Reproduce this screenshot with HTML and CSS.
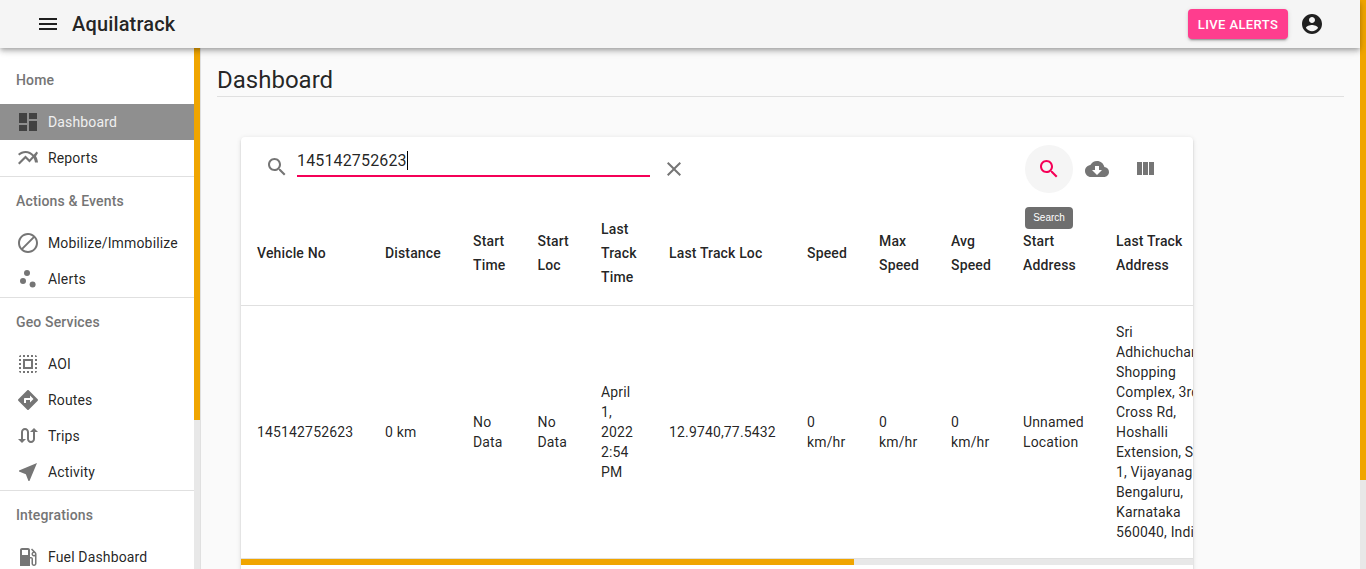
FILE: index.html
```html
<!DOCTYPE html>
<html lang="en">
<head>
  <meta charset="UTF-8" />
  <meta name="viewport" content="width=device-width, initial-scale=1.0"/>
  <title>Dashboard - Aquilatrack</title>
  <link rel="stylesheet" href="styles.css">
</head>
<body>
  <div class="app">
    <div class="page">
      <header class="topbar">
        <svg class="icon menu-icon" viewBox="0 0 24 24"><path d="M3 18h18v-2H3v2zm0-5h18v-2H3v2zm0-7v2h18V6H3z"/></svg>
        <h1 class="brand">Aquilatrack</h1>
        <button class="live-btn" type="button">Live Alerts</button>
        <svg class="icon account-icon" viewBox="0 0 24 24"><path d="M12 2C6.48 2 2 6.48 2 12s4.48 10 10 10 10-4.48 10-10S17.52 2 12 2zm0 3c1.66 0 3 1.34 3 3s-1.34 3-3 3-3-1.34-3-3 1.34-3 3-3zm0 14.2c-2.5 0-4.71-1.28-6-3.22.03-1.99 4-3.08 6-3.08 1.99 0 5.97 1.09 6 3.08-1.29 1.94-3.5 3.22-6 3.22z"/></svg>
      </header>

      <div class="layout">
        <aside class="sidebar">
          <nav class="nav">
            <section class="nav-group">
              <h3 class="nav-label">Home</h3>
              <a class="nav-item active">
                <svg class="icon" viewBox="0 0 24 24"><path d="M3 13h8V3H3v10zm0 8h8v-6H3v6zm10 0h8V11h-8v10zm0-18v6h8V3h-8z"/></svg>
                Dashboard
              </a>
              <a class="nav-item">
                <svg class="icon" viewBox="0 0 24 24"><path d="M22 6.92l-1.41-1.41-2.85 3.21C15.68 6.4 12.83 5 9.61 5 6.72 5 4.07 6.16 2 8l1.42 1.42C5.12 7.93 7.27 7 9.61 7c2.74 0 5.09 1.26 6.77 3.24l-2.88 3.24-4-4L2 16.99l1.5 1.5 6-6.01 4 4 4.05-4.55c.75 1.35 1.25 2.9 1.44 4.55H22c-.22-2.3-.95-4.39-2.04-6.14L22 6.92z"/></svg>
                Reports
              </a>
            </section>
            <section class="nav-group">
              <h3 class="nav-label">Actions &amp; Events</h3>
              <a class="nav-item">
                <svg class="icon" viewBox="0 0 24 24"><path d="M12 2C6.48 2 2 6.48 2 12s4.48 10 10 10 10-4.48 10-10S17.52 2 12 2zM4 12c0-4.42 3.58-8 8-8 1.85 0 3.55.63 4.9 1.69L5.69 16.9C4.63 15.55 4 13.85 4 12zm8 8c-1.85 0-3.55-.63-4.9-1.69L18.31 7.1C19.37 8.45 20 10.15 20 12c0 4.42-3.58 8-8 8z"/></svg>
                Mobilize/Immobilize
              </a>
              <a class="nav-item">
                <svg class="icon" viewBox="0 0 24 24"><circle cx="7" cy="14" r="3"/><circle cx="11" cy="6" r="3"/><circle cx="16.6" cy="17.6" r="3"/></svg>
                Alerts
              </a>
            </section>
            <section class="nav-group">
              <h3 class="nav-label">Geo Services</h3>
              <a class="nav-item">
                <svg class="icon" viewBox="0 0 24 24"><path d="M3 5h2V3c-1.1 0-2 .9-2 2zm0 8h2v-2H3v2zm4 8h2v-2H7v2zM3 9h2V7H3v2zm10-6h-2v2h2V3zm6 0v2h2c0-1.1-.9-2-2-2zM5 21v-2H3c0 1.1.9 2 2 2zm-2-4h2v-2H3v2zM9 3H7v2h2V3zm2 18h2v-2h-2v2zm8-8h2v-2h-2v2zm0 8c1.1 0 2-.9 2-2h-2v2zm0-12h2V7h-2v2zm0 8h2v-2h-2v2zm-4 4h2v-2h-2v2zm0-16h2V3h-2v2zM7 17h10V7H7v10zm2-8h6v6H9V9z"/></svg>
                AOI
              </a>
              <a class="nav-item">
                <svg class="icon" viewBox="0 0 24 24"><path d="M21.71 11.29l-9-9c-.39-.39-1.02-.39-1.41 0l-9 9c-.39.39-.39 1.02 0 1.41l9 9c.39.39 1.02.39 1.41 0l9-9c.39-.38.39-1.01 0-1.41zM14 14.5V12h-4v3H8v-4c0-.55.45-1 1-1h5V7.5l3.5 3.5-3.5 3.5z"/></svg>
                Routes
              </a>
              <a class="nav-item">
                <svg class="icon" viewBox="0 0 24 24"><path d="M18 4l-4 4h3v7c0 1.1-.9 2-2 2s-2-.9-2-2V8c0-2.21-1.79-4-4-4S5 5.79 5 8v7H2l4 4 4-4H7V8c0-1.1.9-2 2-2s2 .9 2 2v7c0 2.21 1.79 4 4 4s4-1.79 4-4V8h3l-4-4z"/></svg>
                Trips
              </a>
              <a class="nav-item">
                <svg class="icon" viewBox="0 0 24 24"><path d="M21 3L3 10.53v.98l6.84 2.65L12.48 21h.98L21 3z"/></svg>
                Activity
              </a>
            </section>
            <section class="nav-group">
              <h3 class="nav-label">Integrations</h3>
              <a class="nav-item">
                <svg class="icon" viewBox="0 0 24 24"><path d="M19.77 7.23l.01-.01-3.72-3.72L15 4.56l2.11 2.11c-.94.36-1.61 1.26-1.61 2.33 0 1.38 1.12 2.5 2.5 2.5.36 0 .69-.08 1-.21v7.21c0 .55-.45 1-1 1s-1-.45-1-1V14c0-1.1-.9-2-2-2h-1V5c0-1.1-.9-2-2-2H6c-1.1 0-2 .9-2 2v16h10v-7.5h1.5v5c0 1.38 1.12 2.5 2.5 2.5s2.5-1.12 2.5-2.5V9c0-.69-.28-1.32-.73-1.77zM12 10H6V5h6v5zm6 0c-.55 0-1-.45-1-1s.45-1 1-1 1 .45 1 1-.45 1-1 1z"/></svg>
                Fuel Dashboard
              </a>
            </section>
          </nav>
          <div class="rail"><div class="rail-thumb side-thumb"></div></div>
        </aside>

        <main class="content">
          <h2 class="page-title">Dashboard</h2>

          <div class="card">
            <div class="toolbar">
              <svg class="icon search-icon" viewBox="0 0 24 24"><path d="M15.5 14h-.79l-.28-.27C15.41 12.59 16 11.11 16 9.5 16 5.91 13.09 3 9.5 3S3 5.91 3 9.5 5.91 16 9.5 16c1.61 0 3.09-.59 4.23-1.57l.27.28v.79l5 4.99L20.49 19l-4.99-5zm-6 0C7.01 14 5 11.99 5 9.5S7.01 5 9.5 5 14 7.01 14 9.5 11.99 14 9.5 14z"/></svg>
              <div class="search-field"><span class="search-value">145142752623</span></div>
              <svg class="icon clear-icon" viewBox="0 0 24 24"><path d="M19 6.41L17.59 5 12 10.59 6.41 5 5 6.41 10.59 12 5 17.59 6.41 19 12 13.41 17.59 19 19 17.59 13.41 12z"/></svg>
              <div class="actions">
                <button class="icon-btn selected" type="button">
                  <svg class="icon" viewBox="0 0 24 24"><path d="M15.5 14h-.79l-.28-.27C15.41 12.59 16 11.11 16 9.5 16 5.91 13.09 3 9.5 3S3 5.91 3 9.5 5.91 16 9.5 16c1.61 0 3.09-.59 4.23-1.57l.27.28v.79l5 4.99L20.49 19l-4.99-5zm-6 0C7.01 14 5 11.99 5 9.5S7.01 5 9.5 5 14 7.01 14 9.5 11.99 14 9.5 14z"/></svg>
                  <span class="tooltip">Search</span>
                </button>
                <button class="icon-btn" type="button">
                  <svg class="icon" viewBox="0 0 24 24"><path d="M19.35 10.04C18.67 6.59 15.64 4 12 4 9.11 4 6.6 5.64 5.35 8.04 2.34 8.36 0 10.91 0 14c0 3.31 2.69 6 6 6h13c2.76 0 5-2.24 5-5 0-2.64-2.05-4.78-4.65-4.96zM17 13l-5 5-5-5h3V9h4v4h3z"/></svg>
                </button>
                <button class="icon-btn" type="button">
                  <svg class="icon" viewBox="0 0 24 24"><path d="M10 18h5V5h-5v13zm-6 0h5V5H4v13zM16 5v13h5V5h-5z"/></svg>
                </button>
              </div>
            </div>

            <div class="table-wrap">
              <table class="data-table">
                <colgroup>
                  <col class="col-vehicle">
                  <col class="col-distance">
                  <col class="col-start-time">
                  <col class="col-start-loc">
                  <col class="col-last-time">
                  <col class="col-last-loc">
                  <col class="col-metric">
                  <col class="col-metric">
                  <col class="col-metric">
                  <col class="col-start-addr">
                  <col class="col-last-addr">
                  <col>
                </colgroup>
                <thead>
                  <tr>
                    <th>Vehicle No</th>
                    <th>Distance</th>
                    <th>Start Time</th>
                    <th>Start Loc</th>
                    <th>Last Track Time</th>
                    <th>Last Track Loc</th>
                    <th>Speed</th>
                    <th>Max Speed</th>
                    <th>Avg Speed</th>
                    <th>Start Address</th>
                    <th>Last Track Address</th>
                    <th></th>
                  </tr>
                </thead>
                <tbody>
                  <tr>
                    <td>145142752623</td>
                    <td>0 km</td>
                    <td>No Data</td>
                    <td>No Data</td>
                    <td>April 1, 2022 2:54 PM</td>
                    <td>12.9740,77.5432</td>
                    <td>0 km/hr</td>
                    <td>0 km/hr</td>
                    <td>0 km/hr</td>
                    <td>Unnamed Location</td>
                    <td>Sri Adhichuchanagiri Shopping Complex, 3rd Cross Rd, Hoshalli Extension, Stage 1, Vijayanagar, Bengaluru, Karnataka 560040, India</td>
                    <td></td>
                  </tr>
                </tbody>
              </table>
            </div>
            <div class="hbar"><div class="hbar-thumb"></div></div>
          </div>
        </main>
      </div>
    </div>
    <div class="rail"><div class="rail-thumb page-thumb"></div></div>
  </div>
</body>
</html>
```

FILE: styles.css
```css
* {
  box-sizing: border-box;
}
html, body {
  height: 100%;
  margin: 0;
  overflow: hidden;
}
body {
  font-family: Roboto, "Liberation Sans", sans-serif;
  font-size: 14px;
  letter-spacing: 0.15px;
  color: rgba(0,0,0,0.87);
  background: #fafafa;
}
.icon {
  width: 24px;
  height: 24px;
  fill: #757575;
  flex-shrink: 0;
  display: block;
}
.app {
  height: 100vh;
  display: flex;
}
.page {
  flex: 1;
  min-width: 0;
  display: flex;
  flex-direction: column;
}

.rail {
  width: 6px;
  flex-shrink: 0;
  background: #e8e8e8;
}
.rail-thumb {
  background: #f0a500;
}
.page-thumb { height: 480px; }
.side-thumb { height: 372px; }
.hbar {
  height: 6px;
  background: #e8e8e8;
}
.hbar-thumb {
  width: 613px;
  height: 6px;
  background: #f0a500;
}

/* top bar */
.topbar {
  position: relative;
  z-index: 10;
  height: 48px;
  flex-shrink: 0;
  display: flex;
  align-items: center;
  padding: 0 36px;
  background: #f5f5f5;
  box-shadow: 0 2px 4px -1px rgba(0,0,0,0.2), 0 4px 5px 0 rgba(0,0,0,0.14), 0 1px 10px 0 rgba(0,0,0,0.12);
}
.menu-icon, .account-icon {
  fill: rgba(0,0,0,0.87);
}
.brand {
  margin: 0 auto 0 12px;
  font-size: 20px;
  font-weight: 500;
  line-height: 32px;
}
.live-btn {
  height: 30px;
  width: 100px;
  margin-right: 12px;
  padding: 0;
  border: none;
  border-radius: 4px;
  background: #ff3d8e;
  color: white;
  font-family: inherit;
  font-size: 13px;
  font-weight: 500;
  letter-spacing: 0.4px;
  text-transform: uppercase;
  box-shadow: 0 3px 1px -2px rgba(0,0,0,0.2), 0 2px 2px 0 rgba(0,0,0,0.14), 0 1px 5px 0 rgba(0,0,0,0.12);
}

/* sidebar */
.layout {
  flex: 1;
  min-height: 0;
  display: flex;
}
.sidebar {
  width: 201px;
  flex-shrink: 0;
  display: flex;
  overflow: hidden;
  background: white;
  border-right: 1px solid #e0e0e0;
}
.nav {
  flex: 1;
  min-width: 0;
  padding-top: 8px;
}
.nav-group {
  border-bottom: 1px solid #e0e0e0;
}
.nav-group:last-child {
  border-bottom: none;
}
.nav-label {
  margin: 0;
  padding: 14px 16px;
  font-size: 14px;
  font-weight: 500;
  line-height: 20px;
  color: #757575;
}
.nav-item {
  height: 36px;
  display: flex;
  align-items: center;
  gap: 8px;
  padding-left: 16px;
  white-space: nowrap;
}
.nav-item.active {
  background: #8f8f8f;
  color: #f0f0f0;
}
.nav-item.active .icon {
  fill: #424242;
}

/* main area */
.content {
  flex: 1;
  min-width: 0;
  overflow: hidden;
  padding: 16px 16px 0;
}
.page-title {
  height: 33px;
  margin: 0 0 40px;
  font-size: 24px;
  font-weight: 400;
  line-height: 32px;
  letter-spacing: 0;
  border-bottom: 1px solid #e0e0e0;
}
.card {
  width: 952px;
  margin-left: 24px;
  padding-bottom: 52px;
  background: white;
  border-radius: 4px;
  box-shadow: 0 3px 1px -2px rgba(0,0,0,0.2), 0 2px 2px 0 rgba(0,0,0,0.14), 0 1px 5px 0 rgba(0,0,0,0.12);
}
.toolbar {
  height: 64px;
  display: flex;
  align-items: center;
  padding: 0 24px;
}
.search-icon {
  align-self: flex-start;
  margin: 18px 8px 0 0;
}
.search-field {
  align-self: flex-start;
  width: 353px;
  height: 32px;
  margin-top: 8px;
  padding-top: 6px;
  border-bottom: 2px solid #f50057;
  font-size: 16px;
  line-height: 19px;
}
.search-value {
  display: inline-block;
  height: 19px;
  border-right: 1px solid #000;
}
.clear-icon {
  margin-left: 12px;
}
.actions {
  margin-left: auto;
  display: flex;
}
.icon-btn {
  position: relative;
  width: 48px;
  height: 48px;
  padding: 12px;
  border: none;
  border-radius: 50%;
  background: none;
}
.icon-btn.selected {
  background: #f5f5f5;
}
.icon-btn.selected .icon {
  fill: #f50057;
}
.tooltip {
  position: absolute;
  z-index: 5;
  top: 62px;
  left: 0;
  width: 48px;
  height: 22px;
  border-radius: 4px;
  background: #6e6e6e;
  color: white;
  font-family: inherit;
  font-size: 10px;
  line-height: 21px;
  text-align: center;
}

/* table */
.table-wrap {
  overflow: hidden;
}
.data-table {
  width: 1478px;
  table-layout: fixed;
  border-collapse: collapse;
}
.col-vehicle { width: 128px; }
.col-distance { width: 88px; }
.col-start-time { width: 64.5px; }
.col-start-loc { width: 63.5px; }
.col-last-time { width: 68px; }
.col-last-loc { width: 138px; }
.col-metric { width: 72px; }
.col-start-addr { width: 93px; }
.col-last-addr { width: 144px; }
.data-table th, .data-table td {
  padding: 16px;
  text-align: left;
  vertical-align: middle;
  border-bottom: 1px solid #e0e0e0;
}
.data-table th {
  font-weight: 500;
  line-height: 24px;
}
.data-table td {
  font-weight: 400;
  line-height: 20px;
}
```
